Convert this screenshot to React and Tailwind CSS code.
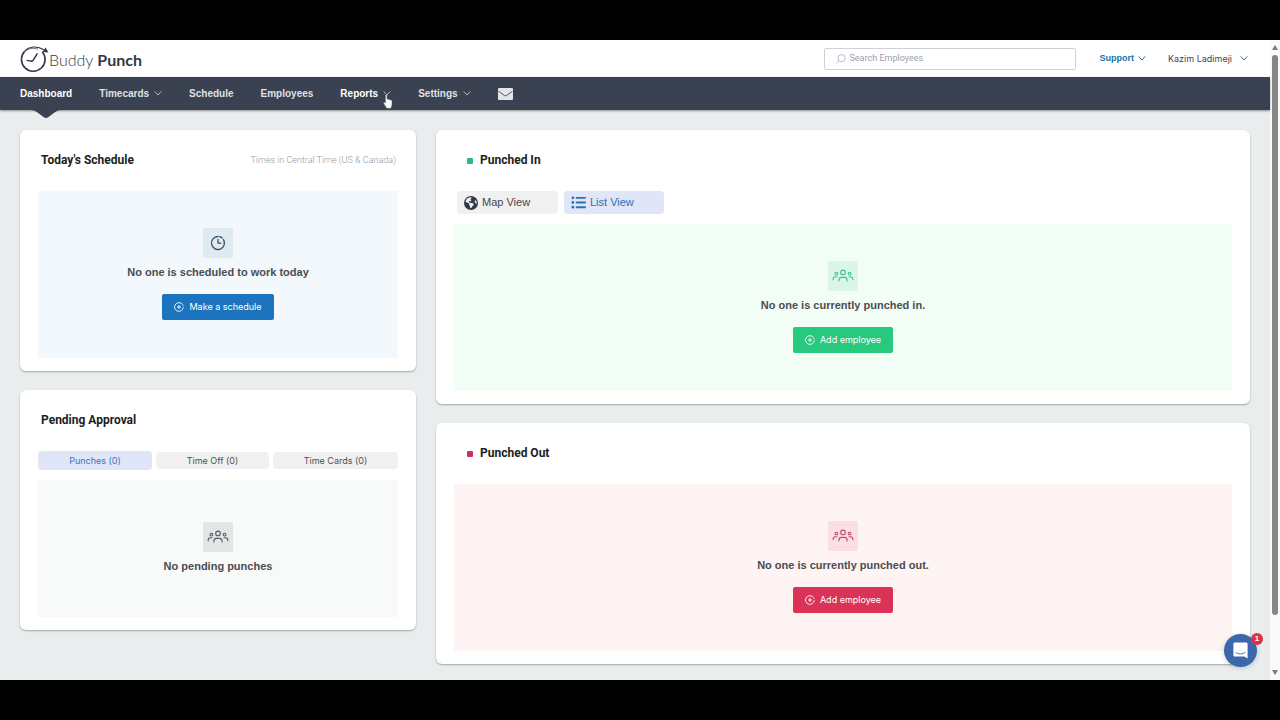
import React from "react";
import { FaEarthAmericas, FaListUl } from "react-icons/fa6";

const arial = "font-['Liberation_Sans',Arial,sans-serif]";
const roboto = "font-[Roboto,sans-serif]";
const inter = "font-[Inter,sans-serif]";

function Chevron({ className }) {
  return (
    <svg viewBox="0 0 8 5" className={`h-[5px] w-2 ${className}`} fill="none" stroke="currentColor" strokeWidth="1" aria-hidden="true">
      <path d="M1 0.7 4 4 7 0.7" strokeLinecap="round" strokeLinejoin="round" />
    </svg>
  );
}

function ClockIcon() {
  return (
    <svg viewBox="0 0 16 16" className="size-4" fill="none" stroke="#424c59" strokeWidth="1.3" strokeLinecap="round" aria-hidden="true">
      <path d="M9.6 1.7A6.5 6.5 0 0 1 12.2 3.1" />
      <path d="M13.5 4.6A6.5 6.5 0 1 1 8 1.5" />
      <path d="M8 4.4V8.2H10.8" strokeLinejoin="round" />
    </svg>
  );
}

function PlusCircle() {
  return (
    <svg viewBox="0 0 10 10" className="size-[10px]" fill="none" stroke="currentColor" strokeWidth="0.9" strokeLinecap="round" aria-hidden="true">
      <path d="M7.6 1.5A4.4 4.4 0 1 0 9.3 5.6" />
      <path d="M8.7 2.7A4.4 4.4 0 0 1 9.2 3.7" />
      <path d="M5 3.4V6.6M3.4 5H6.6" />
    </svg>
  );
}

function PeopleIcon() {
  return (
    <svg viewBox="0 0 22 14" className="h-[14px] w-[22px]" fill="none" stroke="currentColor" strokeWidth="1.1" strokeLinecap="round" aria-hidden="true">
      <circle cx="11" cy="3.4" r="2.3" />
      <path d="M6.9 12V11.2C6.9 9.5 8 8.4 9.7 8.4H12.3C14 8.4 15.1 9.5 15.1 11.2V12" />
      <circle cx="4.4" cy="4.6" r="1.4" />
      <circle cx="17.6" cy="4.6" r="1.4" />
      <path d="M1.2 10.8V10C1.2 8.6 2.1 7.8 3.4 7.8H5" />
      <path d="M20.8 10.8V10C20.8 8.6 19.9 7.8 18.6 7.8H17" />
    </svg>
  );
}

function Logo() {
  return (
    <a href="#home" className="flex items-center text-[#34384a]">
      <svg viewBox="0 0 29 28" className="h-7 w-[29px]" fill="none" stroke="currentColor" aria-hidden="true">
        <path d="M22.3 6.8A11.8 11.8 0 1 1 4.4 6.6" strokeWidth="1.6" />
        <path d="M4.4 6.6C9.4 1.2 17 0.8 24.5 5" strokeWidth="1.3" />
        <path d="M1.8 12C3.4 5 10.6 1.6 18 4.2" strokeWidth="0.7" />
        <path d="M22.6 7 28.4 7.4 25.6 2.6Z" fill="currentColor" stroke="none" />
        <path d="M17.4 8.4 13.6 14.6Q12.6 16.4 10.8 16.2" strokeWidth="1.5" />
        <path d="M12.4 16.3 6.6 15.4" strokeWidth="1.2" />
      </svg>
      <span className="pt-[3px] font-[Lato,sans-serif] text-[16px] leading-6 font-light">
        Buddy <b className="font-bold">Punch</b>
      </span>
    </a>
  );
}

function NavLink({ label, menu, active, bright, children }) {
  return (
    <a href={`#${label.toLowerCase()}`} className={`relative flex h-full items-center gap-[5px] ${active || bright ? "text-white" : "text-[#dfe2e6]"}`}>
      {label}
      {menu && <Chevron className="text-[#b6bcc6]" />}
      {active && (
        <svg viewBox="0 0 30 9" className="absolute top-full left-1/2 h-[9px] w-[30px] -translate-x-1/2" fill="#3a4150" aria-hidden="true">
          <path d="M0 0H30C27 0 25 1.5 22.5 3.2L17.5 7C15.8 8.3 14.2 8.3 12.5 7L7.5 3.2C5 1.5 3 0 0 0Z" />
        </svg>
      )}
      {children}
    </a>
  );
}

function Pointer() {
  return (
    <svg viewBox="0 0 10 15" className="absolute top-[17px] right-[-2px] h-[15px] w-[10px]" fill="#fff" stroke="#555c68" strokeWidth="0.5" aria-hidden="true">
      <path d="M2.4 1.3C2.4 0.2 4 0.2 4 1.3V5.2C4.6 4.7 5.4 4.9 5.6 5.5C6.3 5.1 7.1 5.4 7.2 6C8 5.7 8.9 6.1 9 7V10.4C9 11.9 8.2 12.6 8 14.3H3.4C3.2 12.6 1.3 11.2 0.6 9.3C0.2 8.3 1.4 7.8 2.4 9Z" />
    </svg>
  );
}

function Card({ title, dot, note, children }) {
  return (
    <section className="rounded-[6px] bg-white px-[18px] pb-[13px] shadow-[0_1px_2px_rgba(0,0,0,0.3)]">
      <header className={`flex h-[61px] items-center justify-between pr-[2px] pb-[2px] ${roboto} ${dot ? "pl-[13px]" : "pl-[3px]"}`}>
        <h2 className="flex items-center gap-[7px] text-[12px] leading-4 font-bold text-[#1c1e20]">
          {dot && <span className={`mt-[2px] size-[6px] rounded-[1px] ${dot}`} />}
          {title}
        </h2>
        {note && <p className="text-[9px] leading-4 font-light text-[#96999e]">{note}</p>}
      </header>
      {children}
    </section>
  );
}

function EmptyState({ tone, tile, icon, message, action, actionTone }) {
  return (
    <div className={`flex flex-col items-center ${action ? "pt-[37px] pb-[38px]" : "pt-[42px] pb-[41px]"} ${tone}`}>
      <div className={`grid size-[30px] place-items-center rounded-[1px] ${tile}`}>{icon}</div>
      <p className="mt-1 text-[11px] leading-5 font-bold text-[#4a4d51]">{message}</p>
      {action && (
        <button type="button" className={`mt-3 flex h-[26px] items-center gap-[5px] rounded-[2px] px-3 ${inter} text-[9px] text-white ${actionTone}`}>
          <PlusCircle />
          {action}
        </button>
      )}
    </div>
  );
}

function Header() {
  return (
    <header className="flex h-[37px] items-center bg-white pr-[22px] pl-5">
      <Logo />
      <label className="ml-auto flex h-[22px] w-[252px] items-center gap-1 rounded-[2px] border border-[#cfd1d8] px-[10px]">
        <svg viewBox="0 0 11 10" className="h-[10px] w-[11px]" fill="none" stroke="#a9acba" strokeWidth="0.8" aria-hidden="true">
          <circle cx="6.6" cy="4.2" r="3.6" />
          <path d="M3.9 6.7 1 9.4" />
        </svg>
        <input type="text" aria-label="Search Employees" placeholder="Search Employees" className={`min-w-0 flex-1 outline-none ${roboto} text-[9px] placeholder:text-[#9da0b0]`} />
      </label>
      <button type="button" className="ml-6 flex items-center gap-1 text-[9px] font-bold text-[#1971ac]">
        Support <Chevron className="text-[#1971ac]" />
      </button>
      <button type="button" className={`ml-[22px] flex items-center gap-2 ${inter} text-[9px] text-[#3f4450]`}>
        Kazim Ladimeji <Chevron className="text-[#1971ac]" />
      </button>
    </header>
  );
}

function Nav() {
  return (
    <nav className="relative flex h-[33px] items-center gap-[27px] bg-[#3a4150] px-5 text-[10px] font-bold shadow-[0_1px_2px_rgba(0,0,0,0.4)]">
      <NavLink label="Dashboard" active />
      <NavLink label="Timecards" menu />
      <NavLink label="Schedule" />
      <NavLink label="Employees" />
      <NavLink label="Reports" menu bright>
        <Pointer />
      </NavLink>
      <NavLink label="Settings" menu />
      <a href="#messages" aria-label="Messages">
        <svg viewBox="0 0 15 12" className="h-3 w-[15px]" aria-hidden="true">
          <rect width="15" height="12" rx="1" fill="#e3e5e7" />
          <path d="M0.5 3.2 6.3 7.4C7.1 8 7.9 8 8.7 7.4L14.5 3.2" fill="none" stroke="#3a4150" strokeWidth="0.9" />
        </svg>
      </a>
    </nav>
  );
}

function Scrollbar() {
  return (
    <div className="flex w-[10px] flex-col items-center bg-[#fafafa]" aria-hidden="true">
      <svg viewBox="0 0 10 15" className="h-[15px] w-[10px]" fill="#7d7d7d"><path d="M5 5 8 10H2Z" /></svg>
      <div className="w-[6px] flex-[56] rounded-full bg-[#868686]" />
      <div className="flex-[5]" />
      <svg viewBox="0 0 10 15" className="h-[15px] w-[10px]" fill="#7d7d7d"><path d="M5 10 8 5H2Z" /></svg>
    </div>
  );
}

export default function App() {
  return (
    <div className={`flex min-h-screen flex-col bg-black py-10 ${arial}`}>
      <div className="relative flex flex-1">
        <div className="flex min-w-0 flex-1 flex-col bg-[#e9edee]">
          <Header />
          <Nav />
          <main className="grid grid-cols-[396fr_814fr] items-start gap-5 px-5 pt-5 pb-4">
            <div className="flex flex-col gap-[19px]">
              <Card title="Today's Schedule" note="Times in Central Time (US & Canada)">
                <EmptyState tone="bg-[#f2f8fb]" tile="bg-[#deebf3]" icon={<ClockIcon />} message="No one is scheduled to work today" action="Make a schedule" actionTone="bg-[#1b74bd]" />
              </Card>
              <Card title="Pending Approval">
                <div className={`mb-[10px] flex h-[19px] items-center gap-1 ${inter} text-[9px] text-[#4d5157]`}>
                  <button type="button" className="h-full flex-[114] rounded-[4px] bg-[#e0e5f8] text-[#3478ba]">Punches (0)</button>
                  <button type="button" className="h-[17px] flex-[113] rounded-[4px] bg-[#f0f0f0]">Time Off (0)</button>
                  <button type="button" className="h-[17px] flex-[125] rounded-[4px] bg-[#f0f0f0]">Time Cards (0)</button>
                </div>
                <EmptyState tone="bg-[#f8f9f9]" tile="bg-[#e2e6e7] text-[#555d65]" icon={<PeopleIcon />} message="No pending punches" />
              </Card>
            </div>
            <div className="flex flex-col gap-[19px]">
              <Card title="Punched In" dot="bg-[#2bbd7e]">
                <div className="mb-[10px] flex h-[23px] gap-[6px] pl-[3px] text-[11px]">
                  <button type="button" className="flex w-[101px] items-center gap-1 rounded-[4px] bg-[#f0f0f0] px-[7px] text-[#43474d]">
                    <FaEarthAmericas className="size-[14px] text-[#2c3a4a]" aria-hidden="true" />
                    Map View
                  </button>
                  <button type="button" className="flex w-[100px] items-center gap-1 rounded-[4px] bg-[#e0e5f8] px-[7px] text-[#2a71b3]">
                    <FaListUl className="size-[15px]" aria-hidden="true" />
                    List View
                  </button>
                </div>
                <EmptyState tone="bg-[#f2fdf6]" tile="bg-[#dbf6e9] text-[#43c08c]" icon={<PeopleIcon />} message="No one is currently punched in." action="Add employee" actionTone="bg-[#29c87f]" />
              </Card>
              <Card title="Punched Out" dot="bg-[#cf3057]">
                <EmptyState tone="bg-[#fdf4f3]" tile="bg-[#fadfe4] text-[#c84a6b]" icon={<PeopleIcon />} message="No one is currently punched out." action="Add employee" actionTone="bg-[#db3357]" />
              </Card>
            </div>
          </main>
        </div>
        <Scrollbar />
        <button type="button" aria-label="Open chat, 1 unread message" className="absolute right-[23px] bottom-[13px] grid size-[33px] place-items-center rounded-full bg-[#3b68ad] shadow-[0_1px_5px_rgba(0,0,0,0.2)]">
          <svg viewBox="0 0 15 17" className="h-[17px] w-[15px]" aria-hidden="true">
            <path d="M2 0.5H13C14 0.5 14.6 1.1 14.6 2V16.4L11.4 14.6H2C1 14.6 0.4 14 0.4 13V2C0.4 1.1 1 0.5 2 0.5Z" fill="#fff" />
            <path d="M2.8 10.4C5.4 12.5 9.6 12.5 12.2 10.4" fill="none" stroke="#3b68ad" strokeWidth="0.9" strokeLinecap="round" />
          </svg>
          <span className="absolute -top-px -right-[6px] grid size-3 place-items-center rounded-full bg-[#e0313f] text-[8px] leading-none font-bold text-white">1</span>
        </button>
      </div>
    </div>
  );
}
